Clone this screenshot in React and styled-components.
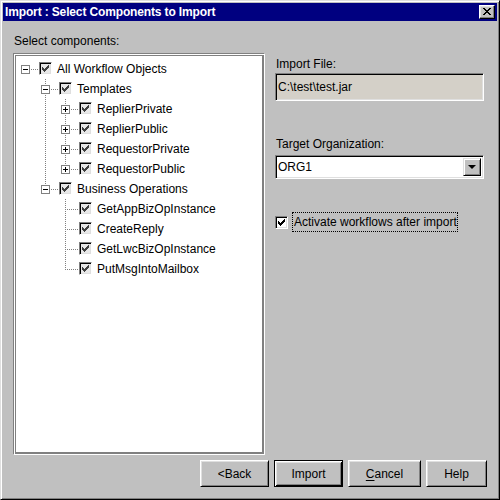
import React from 'react';
import styled, { createGlobalStyle } from 'styled-components';

const GlobalStyle = createGlobalStyle`
  html, body {
    margin: 0;
    padding: 0;
    background: #c0c0c0;
  }
  body {
    font-family: 'Liberation Sans', Arial, sans-serif;
    font-size: 12px;
    color: #000;
  }
`;

const tree = {
  label: 'All Workflow Objects',
  children: [
    {
      label: 'Templates',
      children: [
        { label: 'ReplierPrivate', collapsed: true },
        { label: 'ReplierPublic', collapsed: true },
        { label: 'RequestorPrivate', collapsed: true },
        { label: 'RequestorPublic', collapsed: true },
      ],
    },
    {
      label: 'Business Operations',
      children: [
        { label: 'GetAppBizOpInstance' },
        { label: 'CreateReply' },
        { label: 'GetLwcBizOpInstance' },
        { label: 'PutMsgIntoMailbox' },
      ],
    },
  ],
};

// flatten the tree into rows, remembering which ancestor lines keep going
const flatten = (node, level = 0, guides = [], isLast = true, rows = []) => {
  const hasChildren = !!node.children || node.collapsed;
  rows.push({
    label: node.label,
    level,
    guides,
    isLast,
    hasChildren,
    expanded: !!node.children,
  });
  if (node.children) {
    const nextGuides = level === 0 ? [] : [...guides, !isLast];
    node.children.forEach((child, i) =>
      flatten(child, level + 1, nextGuides, i === node.children.length - 1, rows)
    );
  }
  return rows;
};

const rows = flatten(tree);

const CheckMark = ({ color }) => (
  <svg width="7" height="7" viewBox="0 0 7 7" shapeRendering="crispEdges">
    <g fill={color}>
      <rect x="6" y="0" width="1" height="1" />
      <rect x="5" y="1" width="2" height="1" />
      <rect x="0" y="2" width="1" height="1" />
      <rect x="4" y="2" width="3" height="1" />
      <rect x="0" y="3" width="2" height="1" />
      <rect x="3" y="3" width="3" height="1" />
      <rect x="0" y="4" width="5" height="1" />
      <rect x="1" y="5" width="3" height="1" />
      <rect x="2" y="6" width="1" height="1" />
    </g>
  </svg>
);

const CheckBox = ({ muted }) => (
  <Box $muted={muted}>
    <CheckMark color={muted ? '#404040' : '#000'} />
  </Box>
);

const Guide = ({ on }) => (
  <svg width="20" height="20" shapeRendering="crispEdges">
    {on && (
      <line x1="9.5" y1="0" x2="9.5" y2="20" stroke="#808080" strokeDasharray="1 1" />
    )}
  </svg>
);

const Handle = ({ row }) => (
  <svg width="23" height="20" shapeRendering="crispEdges">
    <g stroke="#808080" strokeDasharray="1 1">
      {row.level > 0 && <line x1="9.5" y1="0" x2="9.5" y2="10" />}
      {row.level > 0 && !row.isLast && <line x1="9.5" y1="10" x2="9.5" y2="20" />}
      <line x1="9" y1="10.5" x2="23" y2="10.5" />
    </g>
    {row.hasChildren && (
      <g>
        <rect x="5.5" y="6.5" width="8" height="8" fill="#fff" stroke="#808080" />
        <line x1="7" y1="10.5" x2="12" y2="10.5" stroke="#000" />
        {!row.expanded && <line x1="9.5" y1="8" x2="9.5" y2="13" stroke="#000" />}
      </g>
    )}
  </svg>
);

const CloseGlyph = () => (
  <svg width="8" height="7" viewBox="0 0 8 7" shapeRendering="crispEdges">
    <g fill="#000">
      <rect x="0" y="0" width="2" height="1" />
      <rect x="6" y="0" width="2" height="1" />
      <rect x="1" y="1" width="2" height="1" />
      <rect x="5" y="1" width="2" height="1" />
      <rect x="2" y="2" width="4" height="1" />
      <rect x="3" y="3" width="2" height="1" />
      <rect x="2" y="4" width="4" height="1" />
      <rect x="1" y="5" width="2" height="1" />
      <rect x="5" y="5" width="2" height="1" />
      <rect x="0" y="6" width="2" height="1" />
      <rect x="6" y="6" width="2" height="1" />
    </g>
  </svg>
);

const App = () => (
  <>
    <GlobalStyle />
    <Window>
      <TitleBar>
        <Title>Import : Select Components to Import</Title>
        <CloseButton>
          <CloseGlyph />
        </CloseButton>
      </TitleBar>
      <Body>
        <Main>
          <LeftColumn>
            <Label $indent={1}>Select components:</Label>
            <TreeFrame>
              <TreeView>
                {rows.map(row => (
                  <TreeRow key={row.label}>
                    {row.level > 0 && <Guide on={false} />}
                    {row.guides.map((on, i) => (
                      <Guide key={i} on={on} />
                    ))}
                    <Handle row={row} />
                    <CheckSlot>
                      <CheckBox muted />
                    </CheckSlot>
                    <RowText>{row.label}</RowText>
                  </TreeRow>
                ))}
              </TreeView>
            </TreeFrame>
          </LeftColumn>
          <RightColumn>
            <Label $top={23} $indent={1}>Import File:</Label>
            <TextField $top={2}>C:\test\test.jar</TextField>
            <Label $top={36} $indent={1}>Target Organization:</Label>
            <Combo $top={4}>
              <ComboValue>ORG1</ComboValue>
              <ComboButton>
                <Arrow />
              </ComboButton>
            </Combo>
            <CheckRow $top={33}>
              <CheckBox />
              <FocusText>Activate workflows after import</FocusText>
            </CheckRow>
          </RightColumn>
        </Main>
        <Footer>
          <Button $width={69}>&lt;Back</Button>
          <Button $width={69} $default>
            Import
          </Button>
          <Button $width={73}>
            <u>C</u>ancel
          </Button>
          <Button $width={61}>Help</Button>
        </Footer>
      </Body>
    </Window>
  </>
);

const Window = styled.div`
  box-sizing: border-box;
  width: 500px;
  height: 500px;
  background: #c0c0c0;
  border: 1px solid;
  border-color: #dfdfdf #000 #000 #dfdfdf;
  box-shadow: inset 1px 1px 0 #fff, inset -1px -1px 0 #808080;
  padding: 2px;
  display: flex;
  flex-direction: column;
`;

const TitleBar = styled.div`
  height: 18px;
  background: #000080;
  display: flex;
  align-items: center;
  padding: 0 2px 0 2px;
`;

const Title = styled.div`
  flex: 1;
  color: #fff;
  font-weight: bold;
  font-size: 12px;
  letter-spacing: -0.14px;
  line-height: 14px;
`;

const CloseButton = styled.div`
  box-sizing: border-box;
  width: 16px;
  height: 14px;
  background: #c0c0c0;
  border: 1px solid;
  border-color: #fff #000 #000 #fff;
  box-shadow: inset -1px -1px 0 #808080, inset 1px 1px 0 #dfdfdf;
  display: flex;
  align-items: center;
  justify-content: center;
  padding-bottom: 1px;
`;

const Body = styled.div`
  flex: 1;
  display: flex;
  flex-direction: column;
  padding: 13px 10px 10px 10px;
`;

const Main = styled.div`
  display: flex;
  gap: 10px;
`;

const LeftColumn = styled.div`
  width: 252px;
  display: flex;
  flex-direction: column;
  gap: 5px;
`;

const Label = styled.div`
  line-height: 14px;
  height: 14px;
  margin-top: ${p => p.$top || 0}px;
  padding-left: ${p => p.$indent || 0}px;
  white-space: nowrap;
`;

const TreeFrame = styled.div`
  box-sizing: border-box;
  height: 402px;
  border: 1px solid;
  border-color: #808080 #fff #fff #808080;
  box-shadow: inset 1px 1px 0 #fff, inset -1px -1px 0 #808080;
  padding: 1px;
  display: flex;
`;

const TreeView = styled.div`
  flex: 1;
  background: #fff;
  border: 1px solid #808080;
  padding: 3px 0 0 0;
`;

const TreeRow = styled.div`
  display: flex;
  height: 20px;
  align-items: flex-start;
`;

const CheckSlot = styled.div`
  padding-top: 3px;
`;

const Box = styled.div`
  box-sizing: border-box;
  width: 13px;
  height: 13px;
  background: ${p => (p.$muted ? '#e8e8e8' : '#fff')};
  border: 1px solid;
  border-color: #808080 #fff #fff #808080;
  box-shadow: inset 1px 1px 0 #000, inset -1px -1px 0 #dfdfdf;
  display: flex;
  align-items: center;
  justify-content: center;
  flex-shrink: 0;
`;

const RowText = styled.div`
  margin-left: 5px;
  padding-top: 3px;
  line-height: 14px;
  white-space: nowrap;
`;

const RightColumn = styled.div`
  width: 209px;
  display: flex;
  flex-direction: column;
`;

const sunken = `
  box-sizing: border-box;
  border: 1px solid;
  border-color: #808080 #fff #fff #808080;
  box-shadow: inset 1px 1px 0 #000, inset -1px -1px 0 #dfdfdf;
`;

const TextField = styled.div`
  ${sunken}
  height: 28px;
  margin-top: ${p => p.$top || 0}px;
  background: #d4d0c8;
  display: flex;
  align-items: center;
  padding-left: 2px;
  line-height: 14px;
`;

const Combo = styled.div`
  ${sunken}
  height: 24px;
  margin-top: ${p => p.$top || 0}px;
  background: #fff;
  display: flex;
  align-items: stretch;
  padding: 2px;
`;

const ComboValue = styled.div`
  flex: 1;
  display: flex;
  align-items: center;
  line-height: 14px;
`;

const ComboButton = styled.div`
  box-sizing: border-box;
  width: 18px;
  background: #c0c0c0;
  border: 1px solid;
  border-color: #dfdfdf #000 #000 #dfdfdf;
  box-shadow: inset 1px 1px 0 #fff, inset -1px -1px 0 #808080;
  display: flex;
  align-items: center;
  justify-content: center;
`;

const Arrow = styled.div`
  width: 0;
  height: 0;
  border-left: 4px solid transparent;
  border-right: 4px solid transparent;
  border-top: 4px solid #000;
`;

const CheckRow = styled.div`
  display: flex;
  align-items: center;
  gap: 4px;
  margin-top: ${p => p.$top || 0}px;
`;

const FocusText = styled.div`
  border: 1px dotted #000;
  padding: 2px 0 2px 1px;
  line-height: 14px;
  white-space: nowrap;
`;

const Footer = styled.div`
  margin-top: auto;
  display: flex;
  justify-content: flex-end;
  gap: 5px;
  padding-right: 0;
`;

const Button = styled.div`
  box-sizing: border-box;
  width: ${p => p.$width}px;
  height: 27px;
  background: #c0c0c0;
  display: flex;
  align-items: center;
  justify-content: center;
  line-height: 14px;
  border: 1px solid;
  border-color: ${p => (p.$default ? '#000' : '#fff #000 #000 #fff')};
  box-shadow: ${p =>
    p.$default
      ? 'inset 1px 1px 0 #fff, inset -1px -1px 0 #000, inset 2px 2px 0 #dfdfdf, inset -2px -2px 0 #808080'
      : 'inset 1px 1px 0 #dfdfdf, inset -1px -1px 0 #808080'};

  u {
    text-decoration: underline;
    text-underline-offset: 2px;
  }
`;

export default App;
